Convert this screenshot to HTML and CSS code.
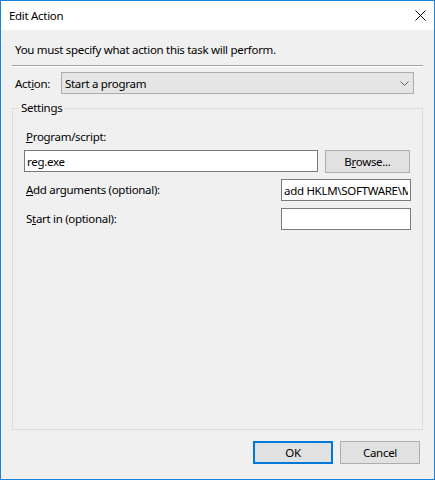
FILE: index.html
```html
<!DOCTYPE html>
<html lang="en">
<head>
    <meta charset="UTF-8">
    <title>Edit Action</title>
    <link rel="stylesheet" href="styles.css">
</head>
<body>
    <div class="window">
        <div class="titlebar">
            <span class="title">Edit Action</span>
            <svg class="close-icon" width="11" height="11" viewBox="0 0 11 11">
                <path d="M0.5 0.5 L10.5 10.5 M10.5 0.5 L0.5 10.5" stroke="#000" stroke-width="1" fill="none"/>
            </svg>
        </div>

        <div class="content">
            <div class="intro">You must specify what action this task will perform.</div>
            <div class="separator"></div>

            <div class="action-row">
                <span class="action-label">Act<u>i</u>on:</span>
                <div class="combo">
                    <span>Start a program</span>
                    <svg width="9" height="5" viewBox="0 0 9 5">
                        <path d="M0.5 0.5 L4.5 4.5 L8.5 0.5" stroke="#606060" stroke-width="1" fill="none"/>
                    </svg>
                </div>
            </div>

            <fieldset class="settings">
                <legend>Settings</legend>
                <div class="settings-body">
                    <div class="field-label"><u>P</u>rogram/script:</div>
                    <div class="program-row">
                        <input class="text-box program-input" type="text" value="reg.exe">
                        <button class="btn browse-btn">B<u>r</u>owse...</button>
                    </div>
                    <div class="opt-row">
                        <span class="field-label"><u>A</u>dd arguments (optional):</span>
                        <input class="text-box opt-input" type="text" value="add HKLM\SOFTWARE\Microsoft\Windows\CurrentVersion\Run">
                    </div>
                    <div class="opt-row">
                        <span class="field-label">S<u>t</u>art in (optional):</span>
                        <input class="text-box opt-input" type="text" value="">
                    </div>
                </div>
            </fieldset>

            <div class="footer">
                <button class="btn default-btn">OK</button>
                <button class="btn">Cancel</button>
            </div>
        </div>
    </div>
</body>
</html>
```

FILE: styles.css
```css
* {
    margin: 0;
    padding: 0;
    box-sizing: border-box;
}

body {
    font-family: "Noto Sans", "Open Sans", sans-serif;
    font-size: 11.5px;
    letter-spacing: -0.3px;
    color: #000;
    background: #fff;
}

.window {
    width: 435px;
    height: 480px;
    border: 1px solid #1883d7;
    display: flex;
    flex-direction: column;
}

.titlebar {
    height: 29px;
    background: #fff;
    display: flex;
    align-items: center;
    justify-content: space-between;
    padding: 0 8px 0 8px;
}

.title {
    line-height: 16px;
}

.content {
    flex: 1;
    background: #f0f0f0;
    padding: 12px 11px 15px 11px;
    display: flex;
    flex-direction: column;
}

.intro {
    line-height: 16px;
    padding-left: 3px;
}

.separator {
    margin-top: 7px;
    border-top: 1px solid #a0a0a0;
    border-bottom: 1px solid #fff;
}

.action-row {
    margin-top: 5px;
    margin-right: 9px;
    display: flex;
    align-items: center;
}

.action-label {
    width: 49px;
    padding-left: 3px;
}

.combo {
    flex: 1;
    height: 22px;
    border: 1px solid #acacac;
    background: #e5e5e5;
    display: flex;
    align-items: center;
    justify-content: space-between;
    padding: 0 4px 0 3px;
}

.settings {
    flex: 1;
    margin-top: 6px;
    border: 1px solid #dcdcdc;
    padding: 0;
}

.settings legend {
    margin-left: 6px;
    padding: 0 2px;
    line-height: 16px;
}

.settings-body {
    padding: 13px 11px 0 11px;
}

.field-label {
    padding-left: 2px;
    line-height: 16px;
}

.program-row {
    margin-top: 5px;
    display: flex;
    align-items: flex-start;
    gap: 7px;
    padding-right: 1px;
}

.text-box {
    height: 22px;
    border: 1px solid #7a7a7a;
    background: #fff;
    font-family: inherit;
    font-size: inherit;
    letter-spacing: inherit;
    color: #000;
    padding: 0 2px;
    outline: none;
}

.program-input {
    flex: 1;
    min-width: 0;
}

.opt-row {
    margin-top: 6px;
    display: flex;
    align-items: center;
    justify-content: space-between;
}

.opt-row + .opt-row {
    margin-top: 7px;
}

.opt-input {
    width: 130px;
}

.btn {
    height: 23px;
    width: 80px;
    border: 1px solid #adadad;
    background: #e1e1e1;
    font-family: inherit;
    font-size: inherit;
    letter-spacing: inherit;
    color: #000;
}

.browse-btn {
    width: 85px;
}

.default-btn {
    border: 2px solid #0078d7;
}

.footer {
    margin-top: 11px;
    margin-right: 3px;
    display: flex;
    justify-content: flex-end;
    gap: 7px;
}
```
